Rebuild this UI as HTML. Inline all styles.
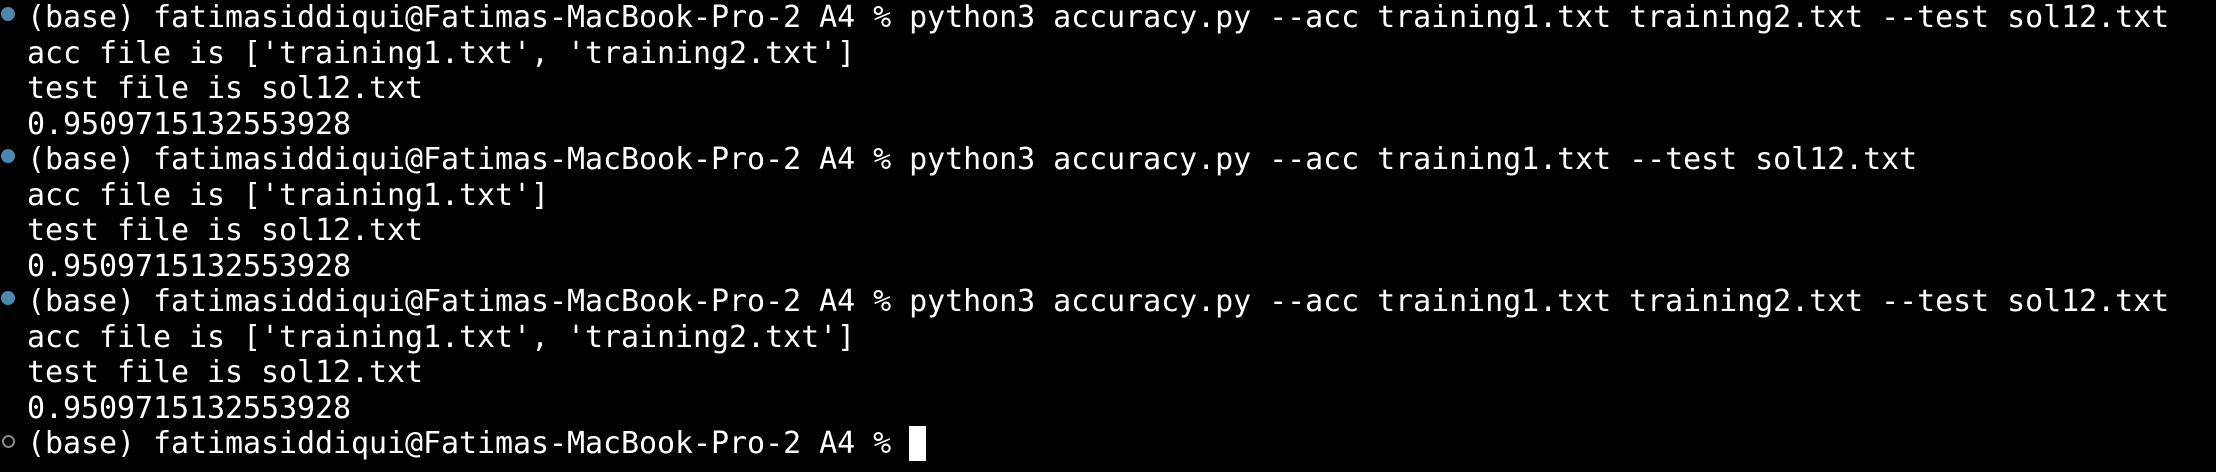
<!DOCTYPE html>
<html><head><meta charset="utf-8"><style>
html,body{margin:0;padding:0;background:#000;width:2216px;height:472px;overflow:hidden}
pre{position:absolute;left:27px;top:0;margin:0;font-family:"DejaVu Sans Mono","Liberation Mono",monospace;font-size:30px;letter-spacing:-0.06px;line-height:35.5px;color:#fff}
.dot{position:absolute;left:1px;width:14px;height:14px;border-radius:50%;background:#4c87b0}
.ring{position:absolute;left:2px;width:9px;height:9px;border-radius:50%;border:2px solid #888}
.cur{display:inline-block;width:17px;height:35px;background:#fff;vertical-align:top}
</style></head><body>
<div class="dot" style="top:7px"></div>
<div class="dot" style="top:149px"></div>
<div class="dot" style="top:291px"></div>
<div class="ring" style="top:435px"></div>
<pre>(base) fatimasiddiqui@Fatimas-MacBook-Pro-2 A4 % python3 accuracy.py --acc training1.txt training2.txt --test sol12.txt
acc file is ['training1.txt', 'training2.txt']
test file is sol12.txt
0.9509715132553928
(base) fatimasiddiqui@Fatimas-MacBook-Pro-2 A4 % python3 accuracy.py --acc training1.txt --test sol12.txt
acc file is ['training1.txt']
test file is sol12.txt
0.9509715132553928
(base) fatimasiddiqui@Fatimas-MacBook-Pro-2 A4 % python3 accuracy.py --acc training1.txt training2.txt --test sol12.txt
acc file is ['training1.txt', 'training2.txt']
test file is sol12.txt
0.9509715132553928
(base) fatimasiddiqui@Fatimas-MacBook-Pro-2 A4 % <span class="cur"></span></pre>
</body></html>
